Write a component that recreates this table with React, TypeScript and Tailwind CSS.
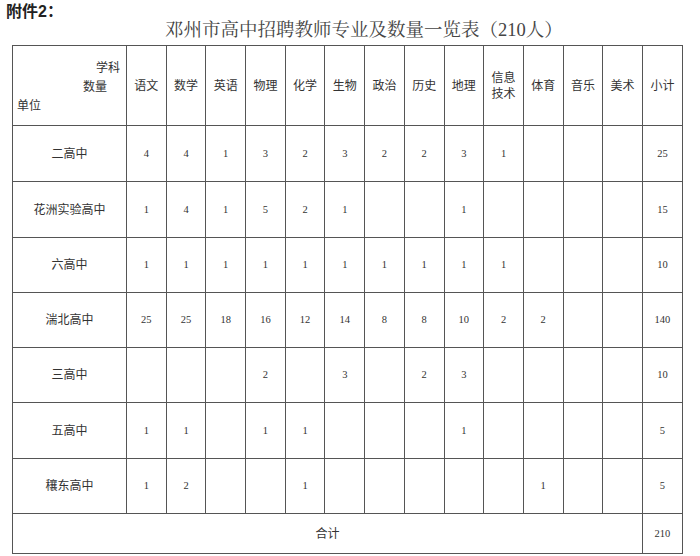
const subjects = ["语文", "数学", "英语", "物理", "化学", "生物", "政治", "历史", "地理", "信息技术", "体育", "音乐", "美术"];

type Row = { name: string; h: string; vals: (number | null)[]; total: number };

const rows: Row[] = [
  { name: "二高中", h: "h-[56px]", vals: [4, 4, 1, 3, 2, 3, 2, 2, 3, 1, null, null, null], total: 25 },
  { name: "花洲实验高中", h: "h-[56px]", vals: [1, 4, 1, 5, 2, 1, null, null, 1, null, null, null, null], total: 15 },
  { name: "六高中", h: "h-[55px]", vals: [1, 1, 1, 1, 1, 1, 1, 1, 1, 1, null, null, null], total: 10 },
  { name: "湍北高中", h: "h-[55px]", vals: [25, 25, 18, 16, 12, 14, 8, 8, 10, 2, 2, null, null], total: 140 },
  { name: "三高中", h: "h-[55px]", vals: [null, null, null, 2, null, 3, null, 2, 3, null, null, null, null], total: 10 },
  { name: "五高中", h: "h-[56px]", vals: [1, 1, null, 1, 1, null, null, null, 1, null, null, null, null], total: 5 },
  { name: "穰东高中", h: "h-[55px]", vals: [1, 2, null, null, 1, null, null, null, null, null, 1, null, null], total: 5 },
];

const cjk = "font-['Liberation_Sans','Noto_Sans_CJK_SC',sans-serif]";
const num = "font-['Liberation_Serif','Noto_Sans_CJK_SC',serif]";
const cell = "border border-[#555] text-center align-middle p-0";

export default function App() {
  return (
    <div className="w-[700px] h-[556px] bg-white overflow-hidden text-[#333]">
      <div className={`${cjk} h-[20px] pl-[6px] pt-[3px] text-[16px] leading-[17px] font-semibold text-[#222]`}>附件2：</div>
      <div className="h-[25px] pl-[28px] text-center font-['Liberation_Serif','Noto_Serif_CJK_SC','Noto_Sans_CJK_SC',serif] text-[18.5px] leading-[20px] text-[#444]">
        邓州市高中招聘教师专业及数量一览表（210人）
      </div>
      <table className="ml-[12px] w-[671px] table-fixed border-collapse">
        <colgroup>
          <col className="w-[114px]" />
          {subjects.map((s) => (
            <col key={s} className="w-[39.7px]" />
          ))}
          <col className="w-[40px]" />
        </colgroup>
        <tbody>
          <tr className="h-[80px]">
            <td className={`${cell} ${cjk} text-[12px] leading-none`}>
              <div className="relative h-[79px]">
                <span className="absolute right-[6px] top-[16px]">学科</span>
                <span className="absolute left-[70px] top-[35px]">数量</span>
                <span className="absolute left-[4px] top-[54px]">单位</span>
              </div>
            </td>
            {subjects.map((s) => (
              <td key={s} className={`${cell} ${cjk} text-[12px] leading-[16px]`}>
                {s === "信息技术" ? (
                  <>
                    信息
                    <br />
                    技术
                  </>
                ) : (
                  s
                )}
              </td>
            ))}
            <td className={`${cell} ${cjk} text-[12px]`}>小计</td>
          </tr>
          {rows.map((r) => (
            <tr key={r.name} className={r.h}>
              <td className={`${cell} ${cjk} text-[12px]`}>{r.name}</td>
              {r.vals.map((v, i) => (
                <td key={i} className={`${cell} ${num} text-[10.5px] text-[#333]`}>
                  {v ?? ""}
                </td>
              ))}
              <td className={`${cell} ${num} text-[10.5px] text-[#333]`}>{r.total}</td>
            </tr>
          ))}
          <tr className="h-[40px]">
            <td colSpan={14} className={`${cell} ${cjk} text-[12px]`}>
              合计
            </td>
            <td className={`${cell} ${num} text-[10.5px] text-[#333]`}>210</td>
          </tr>
        </tbody>
      </table>
    </div>
  );
}
